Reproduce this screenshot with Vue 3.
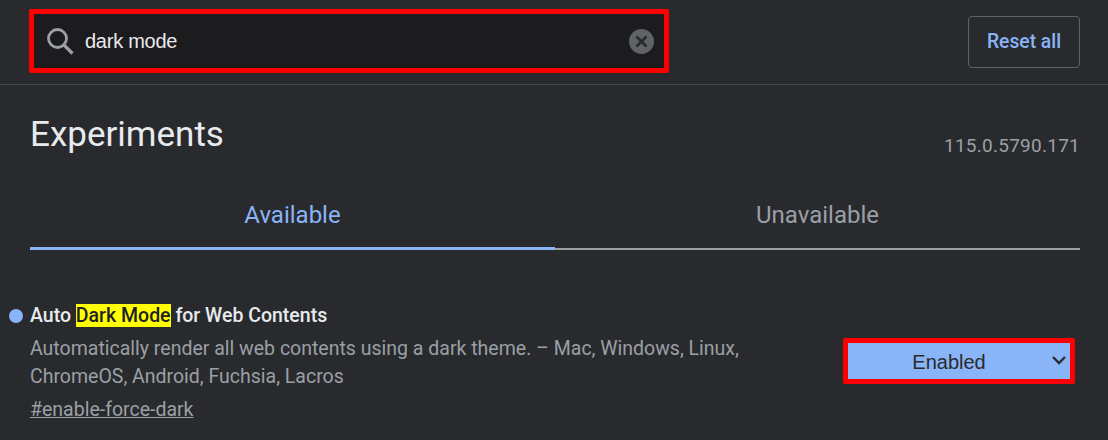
<script setup>
const flagName = 'Auto'
const flagRest = 'for Web Contents'
</script>

<template>
    <div class="page">
        <header class="top-bar">
            <div class="search-box">
                <svg class="icon-search" width="28" height="28" viewBox="0 0 28 28">
                    <circle cx="11.5" cy="11.5" r="9" fill="none" stroke="#9aa0a6" stroke-width="2.8" />
                    <path d="M18 18 L26.5 26.5" stroke="#9aa0a6" stroke-width="3.2" fill="none" />
                </svg>
                <span class="search-text">dark mode</span>
                <svg class="icon-clear" width="25" height="25" viewBox="0 0 25 25">
                    <circle cx="12.5" cy="12.5" r="12.5" fill="#5f6368" />
                    <path d="M7.5 7.5 L17.5 17.5 M17.5 7.5 L7.5 17.5" stroke="#292a2d" stroke-width="2.8" fill="none" />
                </svg>
            </div>
            <button class="btn-reset" type="button">Reset all</button>
        </header>

        <main class="content">
            <div class="title-row">
                <h1 class="title">Experiments</h1>
                <span class="version">115.0.5790.171</span>
            </div>

            <div class="tabs">
                <div class="tab tab-active">Available</div>
                <div class="tab">Unavailable</div>
            </div>

            <section class="flag">
                <div class="flag-info">
                    <h2 class="flag-name">
                        <span class="flag-dot"></span>{{ flagName }} <mark class="hl">Dark Mode</mark> {{ flagRest }}
                    </h2>
                    <p class="flag-desc">Automatically render all web contents using a dark theme. – Mac, Windows, Linux, ChromeOS, Android, Fuchsia, Lacros</p>
                    <a class="flag-link" href="#">#enable-force-dark</a>
                </div>
                <div class="flag-select">
                    <span>Enabled</span>
                    <svg class="icon-chevron" width="16" height="10" viewBox="0 0 16 10">
                        <path d="M2 2 L8 8 L14 2" stroke="#292a2d" stroke-width="2.4" fill="none" />
                    </svg>
                </div>
            </section>
        </main>
    </div>
</template>

<style>
    html, body {
        margin: 0;
        background: #292a2d;
    }
</style>

<style scoped>

    .page{
        width: 1108px;
        height: 440px;
        overflow: hidden;
        background-color: #292a2d;
        font-family: Roboto, "Liberation Sans", sans-serif;
    }

    .top-bar{
        display: flex;
        justify-content: space-between;
        align-items: center;
        box-sizing: border-box;
        height: 85px;
        padding: 0 28px 1px 29px;
        border-bottom: 1px solid #46474a;
    }

    .search-box{
        display: flex;
        align-items: center;
        box-sizing: border-box;
        width: 640px;
        height: 64px;
        margin-top: -2px;
        padding: 0 10px 0 12px;
        border: 5px solid #ff0000;
        border-radius: 2px;
        background-color: #1c1c1e;
    }

    .icon-search{
        flex-shrink: 0;
    }

    .search-text{
        flex: 1;
        margin: 2px 0 0 11px;
        font-family: "Liberation Sans", sans-serif;
        font-size: 20px;
        letter-spacing: -0.25px;
        color: #e8eaed;
    }

    .icon-clear{
        flex-shrink: 0;
        margin-top: 2px;
    }

    .btn-reset{
        box-sizing: border-box;
        width: 112px;
        height: 52px;
        border: 1px solid #5f6368;
        border-radius: 4px;
        background: transparent;
        color: #8ab4f8;
        font-family: Roboto, sans-serif;
        font-size: 19.3px;
        font-weight: 500;
    }

    .content{
        padding: 0 28px 0 30px;
    }

    .title-row{
        display: flex;
        justify-content: space-between;
        align-items: flex-start;
        height: 63px;
        padding-top: 30px;
        box-sizing: border-box;
    }

    .title{
        margin: 0;
        font-size: 35px;
        font-weight: 400;
        line-height: 40px;
        color: #e8eaed;
    }

    .version{
        margin-top: 19px;
        font-size: 19px;
        line-height: 24px;
        color: #9aa0a6;
        letter-spacing: 0.25px;
    }

    .tabs{
        display: flex;
        height: 102px;
    }

    .tab{
        flex: 1;
        box-sizing: border-box;
        height: 102px;
        padding-top: 53px;
        border-bottom: 2px solid #9aa0a6;
        text-align: center;
        font-size: 24px;
        line-height: 28px;
        color: #9aa0a6;
    }

    .tab-active{
        border-bottom: 3px solid #8ab4f8;
        color: #8ab4f8;
    }

    .flag{
        display: flex;
        justify-content: space-between;
        margin-top: 54px;
    }

    .flag-info{
        width: 730px;
    }

    .flag-name{
        position: relative;
        margin: 0;
        font-size: 19.5px;
        font-weight: 500;
        line-height: 24px;
        color: #e8eaed;
    }

    .flag-dot{
        position: absolute;
        left: -21px;
        top: 5px;
        width: 14px;
        height: 14px;
        border-radius: 50%;
        background-color: #8ab4f8;
    }

    .hl{
        background-color: #ffff00;
        color: #202124;
    }

    .flag-desc{
        margin: 7px 0 0;
        font-size: 19.5px;
        line-height: 28px;
        color: #9aa0a6;
    }

    .flag-link{
        display: inline-block;
        margin-top: 7px;
        font-size: 19.5px;
        line-height: 24px;
        color: #9aa0a6;
    }

    .flag-select{
        position: relative;
        display: flex;
        align-items: center;
        justify-content: center;
        box-sizing: border-box;
        width: 232px;
        height: 46px;
        margin-top: 34px;
        margin-right: 5px;
        padding: 2px 20px 0 0;
        border: 5px solid #ff0000;
        border-radius: 2px;
        background-color: #8ab4f8;
        color: #292a2d;
        font-family: "Liberation Sans", sans-serif;
        font-size: 20px;
    }

    .icon-chevron{
        position: absolute;
        right: 3px;
        top: 12px;
    }
</style>
